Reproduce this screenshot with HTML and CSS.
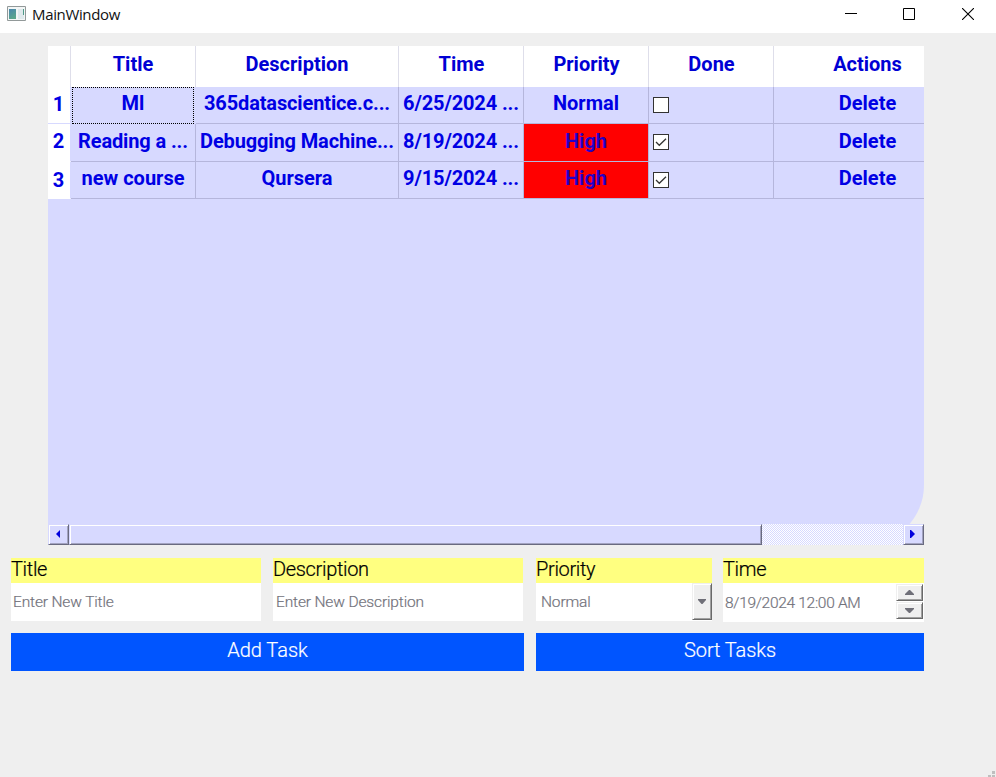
FILE: index.html
```html
<!DOCTYPE html>
<html lang="en">
<head>
<meta charset="utf-8">
<title>MainWindow</title>
<link rel="stylesheet" href="styles.css">
</head>
<body>
<header class="titlebar">
  <svg class="app-icon" width="19" height="16" viewBox="0 0 19 16"><defs><linearGradient id="g" x2="0.4" y2="1"><stop stop-color="#4a86ae"/><stop offset="1" stop-color="#5aa68c"/></linearGradient></defs><path fill="#f3f6f6" stroke="#929999" d="M.5.5h18v14H.5z"/><path fill="url(#g)" d="M2 3h7v10H2z"/><path fill="#dfe9ec" d="M11 3h6v10h-6z"/><path fill="#4e9a88" d="M16 3h1v6h-1z"/></svg>
  <span class="window-title">MainWindow</span>
  <div class="window-controls">
    <svg width="12" height="12" viewBox="0 0 12 12"><path fill="#000" d="M0 5h12v1H0z"/></svg>
    <svg width="12" height="12" viewBox="0 0 12 12"><path fill="none" stroke="#000" d="M.5.5h11v11H.5z"/></svg>
    <svg width="12" height="12" viewBox="0 0 12 12"><path fill="none" stroke="#000" stroke-width="1.1" d="M0 0l12 12M12 0L0 12"/></svg>
  </div>
</header>
<main>
  <section class="table">
    <div class="row head"><div></div><div>Title</div><div>Description</div><div>Time</div><div>Priority</div><div>Done</div><div>Actions</div></div>
    <div class="row first"><div class="num">1</div><div class="focus">Ml</div><div class="tight">365datascientice.c...</div><div class="tight">6/25/2024 ...</div><div>Normal</div><div class="done"><span class="check"></span></div><div>Delete</div></div>
    <div class="row second"><div class="num">2</div><div class="tight">Reading a ...</div><div class="tight">Debugging Machine...</div><div class="tight">8/19/2024 ...</div><div class="high">High</div><div class="done"><span class="check"><svg width="14" height="14" viewBox="0 0 14 14"><path d="M2 7l3.3 3.3L12 3.7"/></svg></span></div><div>Delete</div></div>
    <div class="row third"><div class="num">3</div><div>new course</div><div>Qursera</div><div class="tight">9/15/2024 ...</div><div class="high">High</div><div class="done"><span class="check"><svg width="14" height="14" viewBox="0 0 14 14"><path d="M2 7l3.3 3.3L12 3.7"/></svg></span></div><div>Delete</div></div>
    <div class="space"></div>
    <div class="scrollbar">
      <div class="bevel arrow"><svg width="4" height="8" viewBox="0 0 4 8"><path fill="#00d" d="M4 0v8L0 4z"/></svg></div>
      <div class="bevel thumb"></div>
      <div class="track"></div>
      <div class="bevel arrow"><svg width="5" height="8" viewBox="0 0 5 8"><path fill="#00d" d="M0 0v8h1l4-4-4-4z"/></svg></div>
    </div>
  </section>
  <section class="form">
    <div class="field"><label>Title</label><div class="input">Enter New Title</div></div>
    <div class="field"><label>Description</label><div class="input">Enter New Description</div></div>
    <div class="field"><label>Priority</label><div class="input combo"><span>Normal</span><div class="grey drop"><svg width="8" height="5" viewBox="0 0 8 5"><path d="M0 0h8v1L4.500 5h-1L0 1z"/></svg></div></div></div>
    <div class="field"><label>Time</label><div class="input datetime"><span>8/19/2024 12:00 AM</span><div class="spin"><div class="grey"><svg width="9" height="5" viewBox="0 0 9 5"><path d="M0 5V4l4-4h1l4 4v1z"/></svg></div><div class="grey"><svg width="9" height="5" viewBox="0 0 9 5"><path d="M0 0h9v1L5 5H4L0 1z"/></svg></div></div></div></div>
  </section>
  <section class="actions"><button>Add Task</button><button>Sort Tasks</button></section>
</main>
<footer><svg width="8" height="6" viewBox="0 0 8 6"><path fill="#bfbfbf" d="M5 0h3v3H5zM5 4h3v2H5zM1 4h3v2H1z"/></svg></footer>
</body>
</html>
```
FILE: styles.css
```css
* { box-sizing: border-box; }
body { margin: 0; width: 996px; height: 777px; background: #efefef; font-family: Roboto, sans-serif; overflow: hidden; display: flex; flex-direction: column; }
svg { display: block; flex: none; }
.titlebar { height: 33px; flex: none; background: #fff; display: flex; align-items: flex-start; padding-left: 7px; }
.app-icon { margin-top: 6px; }
.window-title { margin-left: 6px; font: 15px/29px "Open Sans", sans-serif; letter-spacing: -0.35px; color: #111; }
.window-controls { margin-left: auto; display: flex; gap: 47px; padding: 8px 22px 0 0; }
.window-controls svg:first-child { margin-right: -1px; }
main { flex: 1; }
.table { margin: 13px 0 0 48px; width: 876px; height: 499px; background: #d7d9ff; border-bottom-right-radius: 60px; color: #0000e4; font-weight: 700; font-size: 20px; display: flex; flex-direction: column; }
.row { display: grid; grid-template-columns: 23px 125px 203px 125px 125px 125px 150px; height: 38px; flex: none; line-height: 33px; text-align: center; white-space: nowrap; }
.row > div { border-right: 1px solid #b5b6dc; border-bottom: 1px solid #b5b6dc; overflow: hidden; }
.row.head { height: 41px; line-height: 37px; background: #fff; color: #0000d4; }
.row.head > div { border-bottom: 0; border-right-color: #dedeea; }
.head > div:nth-child(n+4) { padding-left: 1px; }
.row > div:last-child { border-right: 0; padding-left: 37px; }
.row.first, .row.third { height: 37px; }
.row.second { line-height: 35px; }
.row > .tight { letter-spacing: -0.13px; }
.row > .num { background: #fff; border-right-color: #d7d9ff; border-bottom-color: #fff; line-height: 35px; padding-right: 1px; }
.first > .num { border-bottom-color: #d7d9ff; }
.third > .num { line-height: 36px; }
.row > .focus { border: 1px dotted #000; margin: 0 2px 0 1px; }
.first > .focus { line-height: 31px; }
.row > .high { background: #f00; color: #2400c8; }
.row > .done { display: flex; align-items: center; padding-left: 4px; }
.second > .done { padding-bottom: 1px; }
.check { width: 16px; height: 16px; border: 1px solid #333; background: #fff; }
.check path { fill: none; stroke: #333; stroke-width: 1.3; }
.space { flex: 1; }
.scrollbar { height: 21px; flex: none; display: flex; }
.bevel { background: #d7d9ff; border: 1px solid; border-color: #d7d9ff #696a80 #696a80 #d7d9ff; box-shadow: inset 1px 1px #fff, inset -1px -1px #a2a3c0; }
.arrow { width: 21px; display: flex; align-items: center; justify-content: center; padding: 0 2px 2px 0; }
.thumb { width: 693px; }
.track { flex: 1; background: repeating-conic-gradient(#fff 0 25%, #d7d9ff 0 50%) 0 0 / 2px 2px; }
.form { display: grid; grid-template-columns: 250px 250px 177px 201px; column-gap: 12px; margin: 13px 0 0 11px; height: 64px; }
.field { display: flex; flex-direction: column; }
.field:nth-child(3) { margin-left: 1px; }
.field:last-child { margin-left: -1px; width: 201px; }
label { height: 25px; background: #ffff80; font-size: 20px; line-height: 23px; letter-spacing: -0.33px; font-weight: 300; color: #000; -webkit-text-stroke: 0.2px #000; }
.input { height: 38px; background: #fff; color: #72727b; font-size: 15.5px; font-weight: 300; letter-spacing: -0.14px; line-height: 39px; padding-left: 2px; white-space: nowrap; -webkit-text-stroke: 0.2px #72727b; }
.field:nth-child(2) .input { padding-left: 3px; }
.combo, .datetime { display: flex; justify-content: space-between; }
.combo { padding-left: 5px; }
.datetime { height: 39px; line-height: 41px; letter-spacing: -0.3px; }
.grey { background: #efefef; border: 1px solid; border-color: #efefef #696969 #696969 #efefef; box-shadow: inset 1px 1px #fff, inset -1px -1px #a0a0a0; display: flex; align-items: center; justify-content: center; }
.grey path { fill: #6f6f78; }
.drop { width: 20px; height: 37px; }
.spin { width: 27px; height: 35px; margin: 1px 1px 0 0; display: grid; grid-template-rows: 17px 17px; gap: 1px; }
.actions { display: flex; gap: 12px; margin: 11px 0 0 11px; }
button { width: 513px; height: 38px; border: 0; padding: 0 0 3px; background: #0055ff; color: #fff; font: 300 20px/35px Roboto, sans-serif; -webkit-text-stroke: 0.2px #fff; }
button + button { width: 388px; letter-spacing: -0.1px; }
footer { display: flex; justify-content: flex-end; padding-right: 1px; }
```
